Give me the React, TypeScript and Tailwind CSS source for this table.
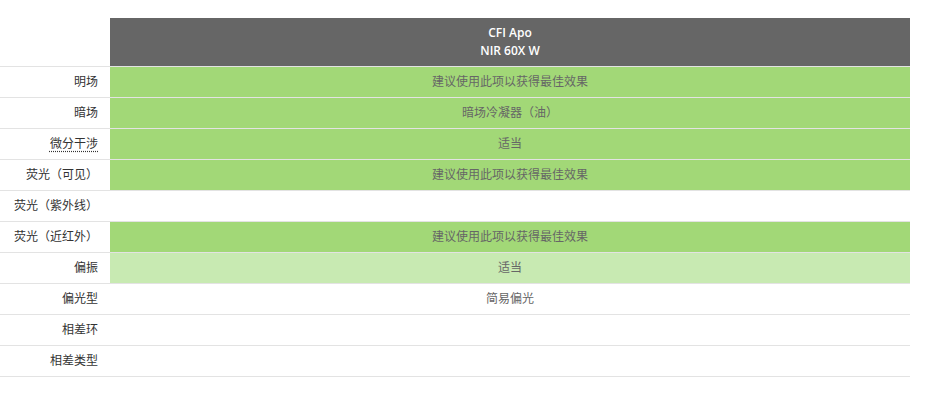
import React from "react";

type Row = { label: string; value?: string; bg?: "green" | "light"; abbr?: boolean };

const rows: Row[] = [
  { label: "明场", value: "建议使用此项以获得最佳效果", bg: "green" },
  { label: "暗场", value: "暗场冷凝器（油）", bg: "green" },
  { label: "微分干涉", value: "适当", bg: "green", abbr: true },
  { label: "荧光（可见）", value: "建议使用此项以获得最佳效果", bg: "green" },
  { label: "荧光（紫外线）" },
  { label: "荧光（近红外）", value: "建议使用此项以获得最佳效果", bg: "green" },
  { label: "偏振", value: "适当", bg: "light" },
  { label: "偏光型", value: "简易偏光" },
  { label: "相差环" },
  { label: "相差类型" },
];

export default function App() {
  return (
    <div
      className="w-[944px] h-[396px] bg-white pt-[18px]"
      style={{ fontFamily: '"Open Sans", "Noto Sans CJK SC", sans-serif' }}
    >
      <div className="w-[910px]">
        <div className="flex h-[48px]">
          <div className="w-[110px] shrink-0" />
          <div className="flex-1 bg-[#666666] text-white text-[12px] font-semibold leading-[18px] flex flex-col items-center justify-center">
            <span>CFI Apo</span>
            <span>NIR 60X W</span>
          </div>
        </div>
        {rows.map((r, i) => (
          <div
            key={i}
            className={`flex border-t border-[#e3e3e3] ${i === rows.length - 1 ? "border-b h-[32px]" : "h-[31px]"}`}
          >
            <div className="w-[110px] shrink-0 flex items-center justify-end pr-[12px] text-[12px] text-[#333333] whitespace-nowrap">
              {r.abbr ? (
                <span className="underline decoration-dotted underline-offset-[3px]">{r.label}</span>
              ) : (
                r.label
              )}
            </div>
            <div
              className={`flex-1 flex items-center justify-center text-[12px] text-[#666666] ${
                r.bg === "green" ? "bg-[#a2d877]" : r.bg === "light" ? "bg-[#c8eab2]" : ""
              }`}
            >
              {r.value}
            </div>
          </div>
        ))}
      </div>
    </div>
  );
}
